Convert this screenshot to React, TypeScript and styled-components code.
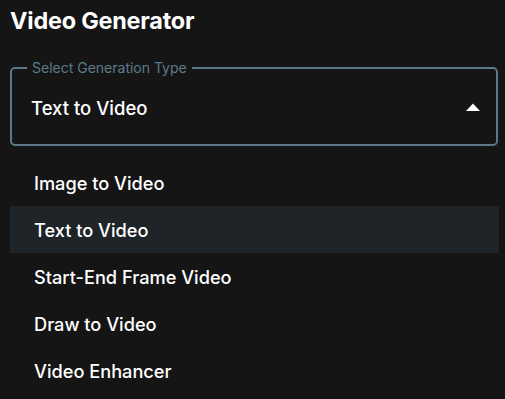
import React from 'react';
import styled, { createGlobalStyle } from 'styled-components';

const GlobalStyle = createGlobalStyle`
  html, body {
    margin: 0;
    padding: 0;
    background: #151515;
  }
  body {
    font-family: Inter, 'Noto Sans', sans-serif;
    color: #fff;
  }
`;

const Page = styled.div`
  position: relative;
  width: 505px;
  height: 399px;
  overflow: hidden;
  padding: 0 7px 0 10px;
  box-sizing: border-box;
`;

const Title = styled.h1`
  margin: 0;
  padding-top: 7px;
  font-size: 23.4px;
  font-weight: 700;
  line-height: 28px;
  letter-spacing: -0.2px;
`;

const Field = styled.fieldset`
  margin: 26px 0 0;
  padding: 0 16px 0 19px;
  height: 85px;
  box-sizing: border-box;
  border: 2px solid #5a7a8a;
  border-radius: 5px;
  display: flex;
  align-items: center;
  justify-content: space-between;
  min-width: 0;
`;

const Legend = styled.legend`
  padding: 0 5px;
  margin-left: -4px;
  font-size: 14px;
  line-height: 14px;
  color: #5b7b8b;
`;

const Value = styled.span`
  font-size: 18.5px;
  font-weight: 500;
  margin-top: -4px;
`;

const Arrow = styled.svg`
  width: 14px;
  height: 8px;
  margin-top: -5px;
  fill: #fff;
`;

const Menu = styled.ul`
  list-style: none;
  margin: 13px 0 0;
  padding: 0;
  width: 489px;
`;

const Item = styled.li<{ $selected?: boolean }>`
  height: 47px;
  display: flex;
  align-items: center;
  padding-left: 24px;
  font-size: 18.2px;
  font-weight: 500;
  background: ${(p) => (p.$selected ? '#1f2428' : 'transparent')};
`;

const options = [
  'Image to Video',
  'Text to Video',
  'Start-End Frame Video',
  'Draw to Video',
  'Video Enhancer',
];

export default function App() {
  const selected = 'Text to Video';
  return (
    <>
      <GlobalStyle />
      <Page>
        <Title>Video Generator</Title>
        <Field>
          <Legend>Select Generation Type</Legend>
          <Value>{selected}</Value>
          <Arrow viewBox="0 0 14 8">
            <polygon points="0,8 7,0.5 14,8" />
          </Arrow>
        </Field>
        <Menu>
          {options.map((o) => (
            <Item key={o} $selected={o === selected}>
              {o}
            </Item>
          ))}
        </Menu>
      </Page>
    </>
  );
}
